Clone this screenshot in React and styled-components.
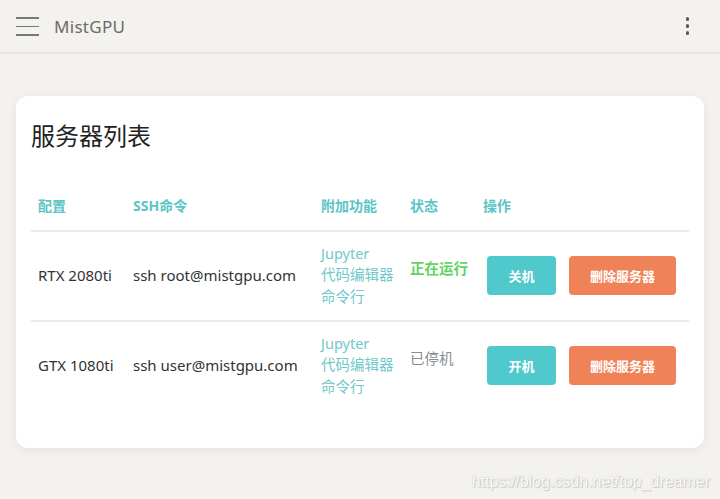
import styled, { createGlobalStyle } from 'styled-components';

const GlobalStyle = createGlobalStyle`
  html, body {
    margin: 0;
    padding: 0;
    background: #f3f2ee;
    font-family: "Noto Sans", "Noto Sans CJK SC", sans-serif;
  }
`;

const servers = [
  { config: 'RTX 2080ti', ssh: 'ssh root@mistgpu.com', running: true },
  { config: 'GTX 1080ti', ssh: 'ssh user@mistgpu.com', running: false },
];

function App() {
  return (
    <Page>
      <GlobalStyle />
      <TopBar>
        <Hamburger>
          <span />
          <span />
          <span />
        </Hamburger>
        <Brand>MistGPU</Brand>
        <Kebab>
          <i />
          <i />
          <i />
        </Kebab>
      </TopBar>
      <Main>
        <Card>
          <Title>服务器列表</Title>
          <HeadRow>
            <HeadCell>配置</HeadCell>
            <HeadCell>SSH命令</HeadCell>
            <HeadCell>附加功能</HeadCell>
            <HeadCell>状态</HeadCell>
            <HeadCell>操作</HeadCell>
          </HeadRow>
          {servers.map((s) => (
            <Row key={s.config}>
              <Cell>{s.config}</Cell>
              <Cell>{s.ssh}</Cell>
              <Extras>
                <span>Jupyter</span>
                <span>代码编辑器</span>
                <span>命令行</span>
              </Extras>
              <Status $running={s.running}>{s.running ? '正在运行' : '已停机'}</Status>
              <Actions>
                <Button $kind="power">{s.running ? '关机' : '开机'}</Button>
                <Button $kind="danger">删除服务器</Button>
              </Actions>
            </Row>
          ))}
        </Card>
      </Main>
      <Watermark>https://blog.csdn.net/top_dreamer</Watermark>
    </Page>
  );
}

const Page = styled.div`
  width: 720px;
  height: 499px;
  background: #f3f2ee;
  position: relative;
  overflow: hidden;
`;

const TopBar = styled.header`
  height: 52px;
  display: flex;
  align-items: center;
  padding: 0 16px;
  border-bottom: 2px solid #e6e5e1;
`;

const Hamburger = styled.div`
  width: 23px;
  display: flex;
  flex-direction: column;
  gap: 7px;
  margin-top: 1px;

  span {
    display: block;
    height: 1.5px;
    background: #777;
  }
`;

const Brand = styled.div`
  margin-left: 15px;
  font-size: 17px;
  color: #6b6b6b;
  letter-spacing: 0.3px;
`;

const Kebab = styled.div`
  margin-left: auto;
  margin-right: 15px;
  display: flex;
  flex-direction: column;
  gap: 3.5px;

  i {
    width: 3.5px;
    height: 3.5px;
    border-radius: 50%;
    background: #555;
  }
`;

const Main = styled.main`
  padding: 42px 16px 0;
`;

const Card = styled.section`
  background: #fff;
  border-radius: 12px;
  box-shadow: 0 2px 10px rgba(0, 0, 0, 0.07);
  padding: 24px 15px 37px;
  height: 352px;
  box-sizing: border-box;
`;

const Title = styled.h1`
  margin: 0 0 44px;
  font-size: 24px;
  font-weight: 400;
  color: #222;
  line-height: 32px;
`;

const columns = '95px 188px 89px 73px 1fr';

const HeadRow = styled.div`
  display: grid;
  grid-template-columns: ${columns};
  height: 34px;
  align-items: start;
  border-bottom: 2px solid #ebebeb;
`;

const HeadCell = styled.div`
  padding-left: 7px;
  font-size: 14px;
  font-weight: 700;
  color: #5cc4c6;
  line-height: 20px;
`;

const Row = styled.div`
  display: grid;
  grid-template-columns: ${columns};
  height: 88px;
  align-items: center;
  & + & {
    border-top: 2px solid #ebebeb;
  }
`;

const Cell = styled.div`
  padding-left: 7px;
  padding-bottom: 2px;
  font-size: 15px;
  color: #333;
`;

const Extras = styled.div`
  padding-left: 7px;
  padding-bottom: 2px;
  display: flex;
  flex-direction: column;
  font-size: 14.5px;
  line-height: 21.5px;
  color: #70c9ca;
`;

const Status = styled.div`
  padding-left: 7px;
  padding-bottom: 18px;
  font-size: 14.5px;
  font-weight: ${(p) => (p.$running ? 700 : 400)};
  color: ${(p) => (p.$running ? '#62d462' : '#8a8d93')};
`;

const Actions = styled.div`
  padding-left: 11px;
  padding-bottom: 2px;
  display: flex;
  gap: 13px;
`;

const Button = styled.button`
  height: 39px;
  width: ${(p) => (p.$kind === 'danger' ? '107px' : '69px')};
  border: none;
  border-radius: 4px;
  font-family: inherit;
  font-size: 13px;
  font-weight: 700;
  color: #fff;
  background: ${(p) => (p.$kind === 'danger' ? '#ef8357' : '#50c9cc')};
  cursor: pointer;
`;

const Watermark = styled.div`
  position: absolute;
  right: 10px;
  bottom: 8px;
  font-family: "Liberation Sans", Arial, sans-serif;
  font-size: 16px;
  color: #fbfbfa;
  text-shadow: 0 0 1px #bbb, 1px 1px 1px #c8c8c8;
`;

export default App;
